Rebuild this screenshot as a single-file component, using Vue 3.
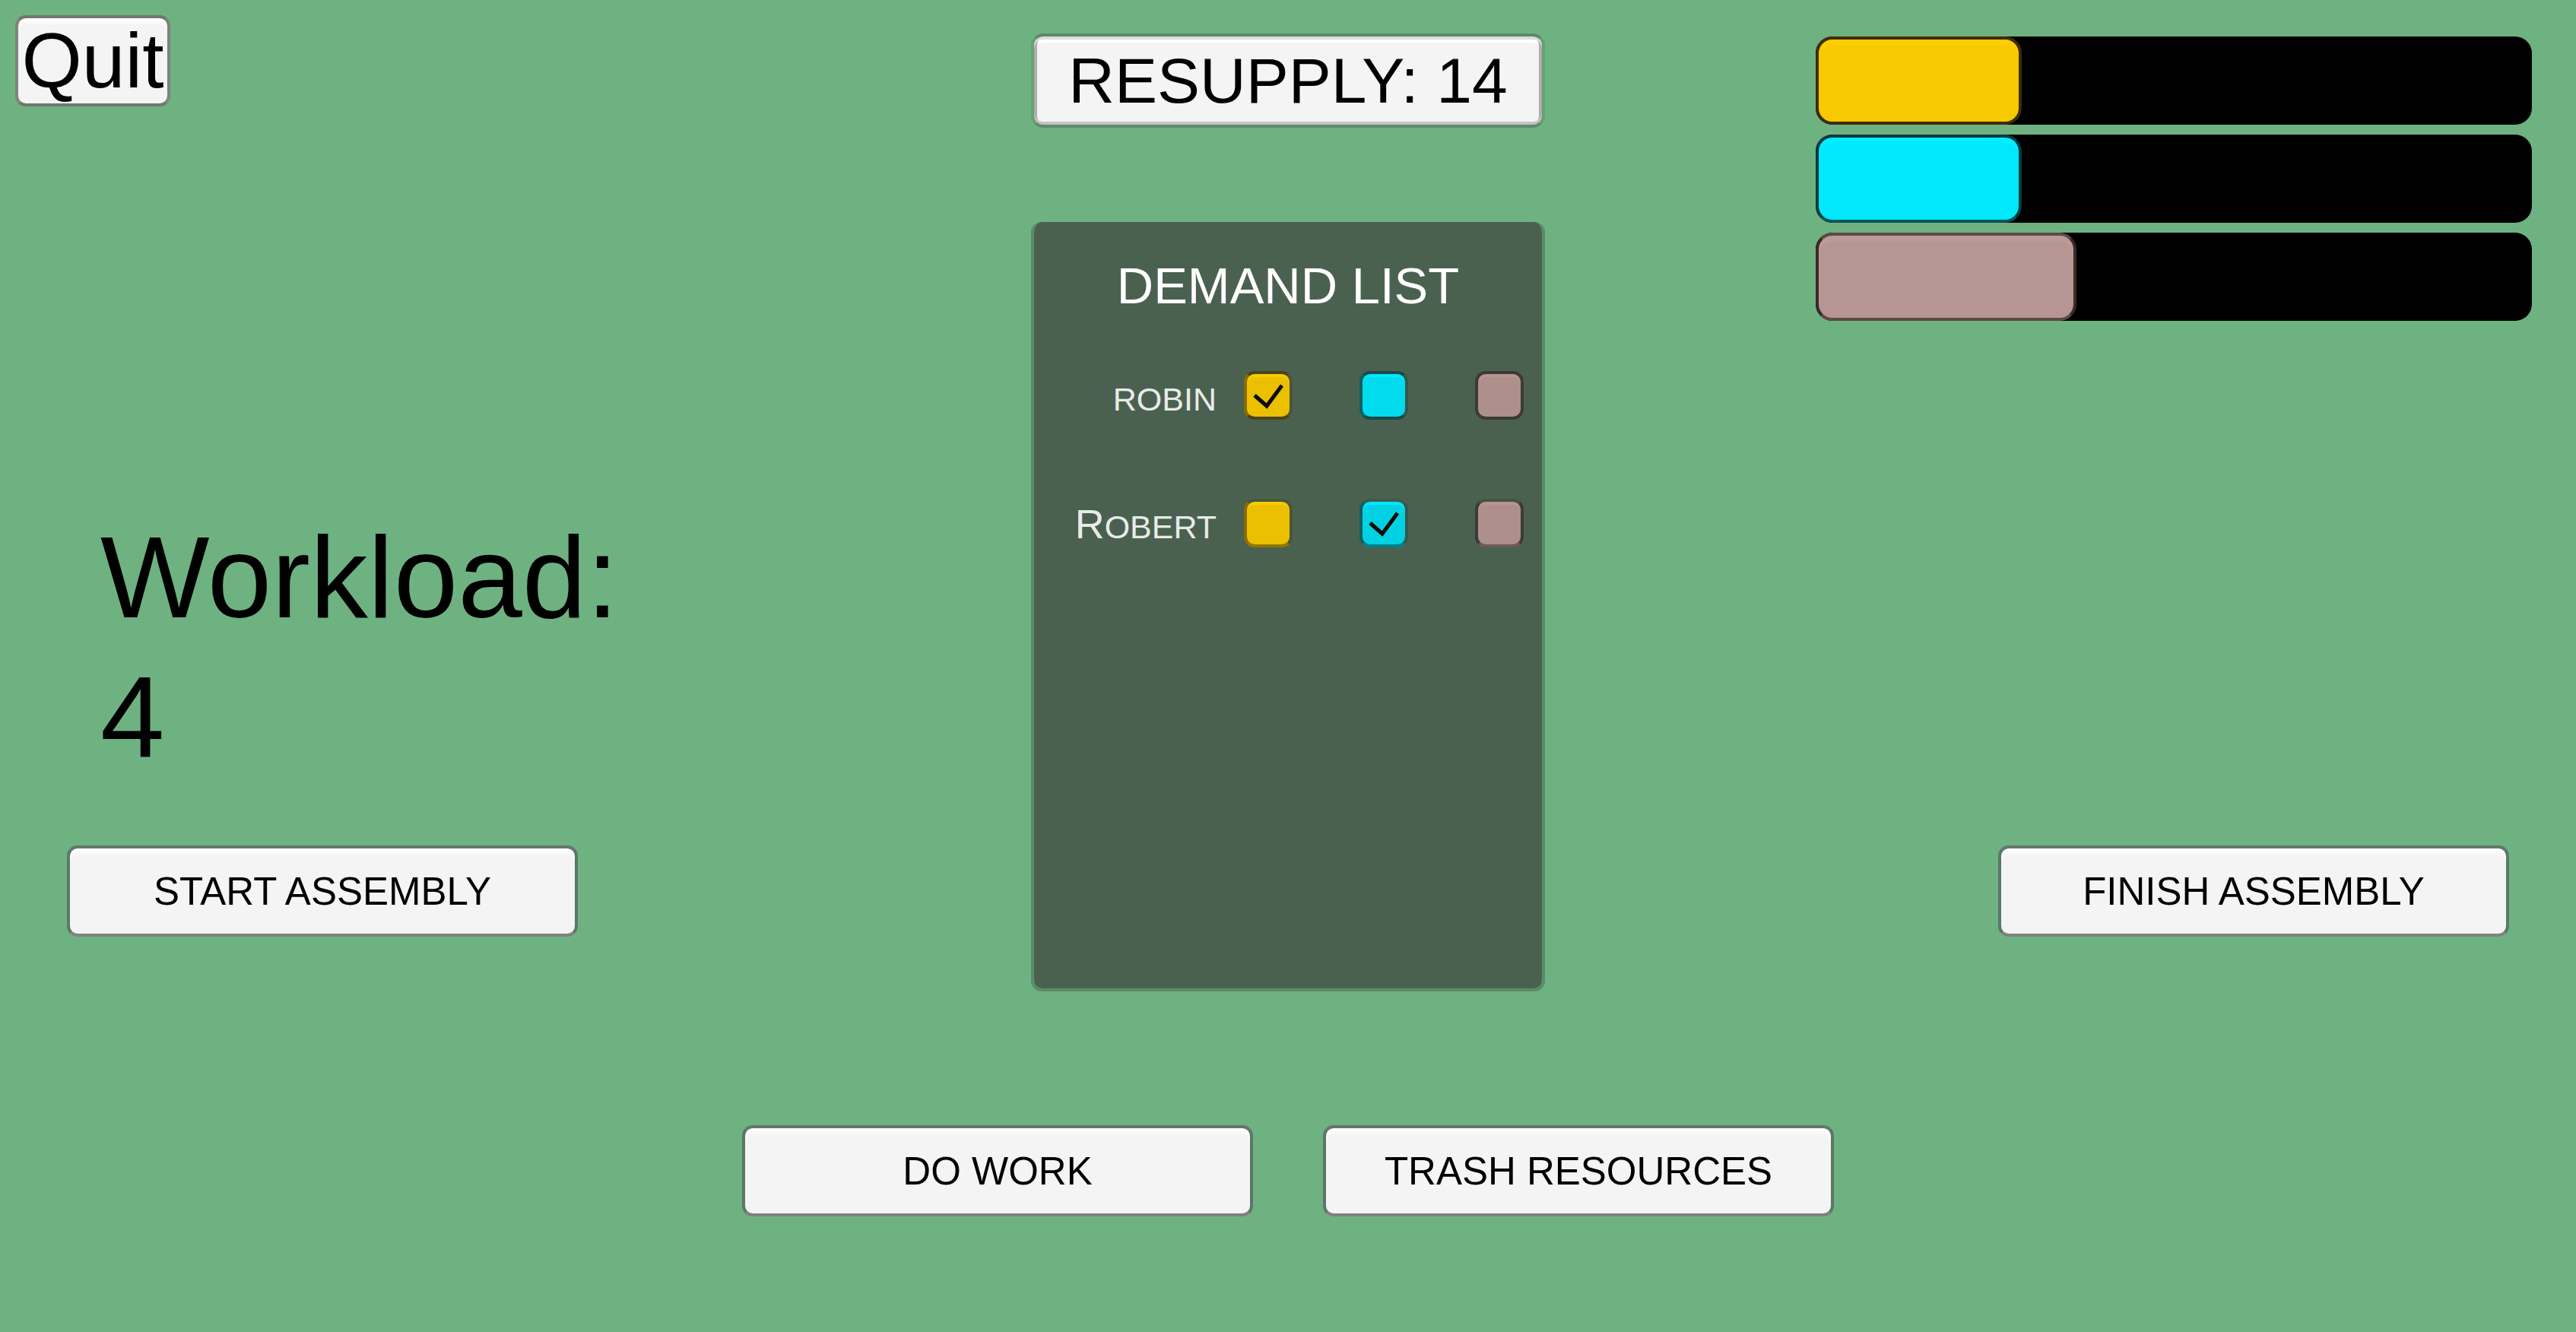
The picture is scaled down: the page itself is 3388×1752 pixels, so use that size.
<script setup>
import { ref, reactive } from 'vue'

const workload = ref(4)
const resupply = ref(14)

const resources = [
  { name: 'Gold', tone: 'gold', level: 28.8 },
  { name: 'Cyan', tone: 'cyan', level: 28.8 },
  { name: 'Rose', tone: 'rose', level: 36.4 },
]

const demands = reactive([
  { name: 'ROBIN', capital: false, done: { gold: true, cyan: false, rose: false } },
  { name: 'ROBERT', capital: true, done: { gold: false, cyan: true, rose: false } },
])
</script>

<template>
  <main class="game">
    <div class="board">
      <section class="side left">
        <button type="button" class="btn quit">Quit</button>
        <p class="workload">Workload:<br />{{ workload }}</p>
        <button type="button" class="btn action">START ASSEMBLY</button>
      </section>

      <section class="center">
        <button type="button" class="btn resupply">RESUPPLY: {{ resupply }}</button>
        <div class="panel">
          <h1 class="title">DEMAND LIST</h1>
          <ul class="demands">
            <li v-for="d in demands" :key="d.name" class="demand">
              <span class="name" :class="{ capital: d.capital }">{{ d.name }}</span>
              <div class="ticks">
                <label v-for="r in resources" :key="r.tone" class="tick">
                  <input
                    v-model="d.done[r.tone]"
                    type="checkbox"
                    :class="r.tone"
                    :aria-label="d.name + ' ' + r.name"
                  />
                  <svg v-if="d.done[r.tone]" viewBox="0 0 64 64" aria-hidden="true">
                    <path d="M14 32 L30 46 L50 19" />
                  </svg>
                </label>
              </div>
            </li>
          </ul>
        </div>
      </section>

      <section class="side right">
        <div class="bars">
          <div
            v-for="r in resources"
            :key="r.tone"
            class="bar"
            role="meter"
            :aria-label="r.name"
            :aria-valuenow="r.level"
            aria-valuemin="0"
            aria-valuemax="100"
          >
            <div class="fill" :class="r.tone" :style="{ width: r.level + '%' }"></div>
          </div>
        </div>
        <button type="button" class="btn action">FINISH ASSEMBLY</button>
      </section>
    </div>

    <footer class="actions">
      <button type="button" class="btn action">DO WORK</button>
      <button type="button" class="btn action">TRASH RESOURCES</button>
    </footer>
  </main>
</template>

<style>
body {
  margin: 0;
  background: #6eb281;
}
</style>

<style scoped>
.game {
  box-sizing: border-box;
  min-height: 100vh;
  background: #6eb281;
  color: #000;
  font-family: "Liberation Sans", Arial, sans-serif;
}

.game * {
  box-sizing: border-box;
}

.board {
  display: grid;
  grid-template-columns: 1fr 676px 1fr;
}

.side {
  display: flex;
  flex-direction: column;
}

.left {
  align-items: flex-start;
  padding-top: 20px;
}

.center {
  padding-top: 44px;
}

.right {
  align-items: flex-end;
  padding-top: 48px;
}

.btn {
  display: block;
  height: 120px;
  padding: 0;
  border: 4px solid;
  border-color: #62776a #5b7966 #808280 #5b7966;
  border-radius: 14px;
  background: #f4f4f4;
  box-shadow: inset 0 4px #fff, inset 0 8px #f9f9f9;
  color: #000;
  font-family: inherit;
  white-space: nowrap;
}

.action {
  width: 672px;
  font-size: 51px;
}

.quit {
  width: 204px;
  margin-left: 20px;
  border-color: #6f776f #7f837f;
  font-size: 102px;
  line-height: 112px;
}

.workload {
  margin: 527px 0 77px 132px;
  font-size: 152px;
  line-height: 184px;
}

.left .action {
  margin-left: 88px;
}

.resupply {
  width: 100%;
  height: 124px;
  border-color: #5d8a6a #66a178;
  border-radius: 16px;
  box-shadow: inset 0 4px #dcdcdc, inset 0 -4px #c4c4c4, inset 4px 0 #b2acae,
    inset -4px 0 #b2acae, inset 0 8px #fff;
  font-size: 84px;
}

.panel {
  min-height: 1012px;
  margin-top: 124px;
  padding: 44px 24px 0;
  border: 4px solid #5a8c68;
  border-top: 0;
  border-radius: 14px;
  background: #4b6150;
  background-clip: padding-box;
  color: #fff;
}

.title {
  margin: 0 0 72px;
  font-size: 67px;
  font-weight: 400;
  line-height: 80px;
  text-align: center;
}

.demands {
  display: flex;
  flex-direction: column;
  gap: 104px;
  margin: 0;
  padding: 0;
  list-style: none;
}

.demand {
  display: flex;
  justify-content: flex-end;
  gap: 36px;
  height: 64px;
}

.name {
  display: block;
  padding-top: 5px;
  color: #e8ebe9;
  font-size: 43px;
  line-height: 64px;
}

.capital::first-letter {
  font-size: 54px;
  line-height: 54px;
}

.ticks {
  display: flex;
  gap: 88px;
}

.tick {
  display: grid;
  width: 64px;
  height: 64px;
}

.tick input,
.tick svg {
  grid-area: 1 / 1;
  width: 64px;
  height: 64px;
  margin: 0;
}

.tick input {
  appearance: none;
  border: 4px solid;
  border-radius: 14px;
}

.tick svg {
  pointer-events: none;
}

.tick path {
  fill: none;
  stroke: #0a0a00;
  stroke-width: 5;
}

.tick .gold {
  border-color: #4b431a #4c5438 #4b431a #8a6c06;
  background: #ebc000;
  box-shadow: inset 0 4px #f7ca00;
}

.tick .cyan {
  border-color: #184a48 #37554d #184a48 #0d5f64;
  background: #00dcee;
  box-shadow: inset 0 4px #00e8fa;
}

.tick .cyan:checked {
  background: #00d2e3;
}

.tick .rose {
  border-color: #3b3b36;
  background: #ae8f8c;
  box-shadow: inset 0 4px #b79592;
}

/* The second row's swatches have a lighter rim above and below. */
.demand:nth-child(even) .gold {
  border-top-color: #46573f;
  border-bottom-color: #917600;
}

.demand:nth-child(even) .cyan {
  border-top-color: #3f5a4c;
  border-bottom-color: #00818c;
}

.demand:nth-child(even) .rose {
  border-top-color: #44543f;
  border-bottom-color: #6d5a58;
}

.bars {
  display: flex;
  flex-direction: column;
  gap: 13px;
  width: 942px;
  margin-right: 58px;
}

.bar {
  height: 116px;
  border-radius: 22px;
  background: #000;
}

.fill {
  height: 100%;
  border: 4px solid;
  border-radius: 22px;
}

.fill.gold {
  border-color: #3f2c08;
  background: #f7c900;
  box-shadow: inset 0 8px #fccd00;
}

.fill.cyan {
  border-color: #0a3a40 #003a40 #00545c;
  background: #00e8f9;
  box-shadow: inset 0 8px #00eeff;
}

.fill.rose {
  border-color: #5d4a48 #3a2a2a;
  background: #b79593;
  box-shadow: inset 0 8px #bc9a97;
}

.right .action {
  margin: 690px 88px 0 0;
}

.actions {
  display: flex;
  justify-content: center;
  gap: 92px;
  padding: 176px 0 152px;
}
</style>
